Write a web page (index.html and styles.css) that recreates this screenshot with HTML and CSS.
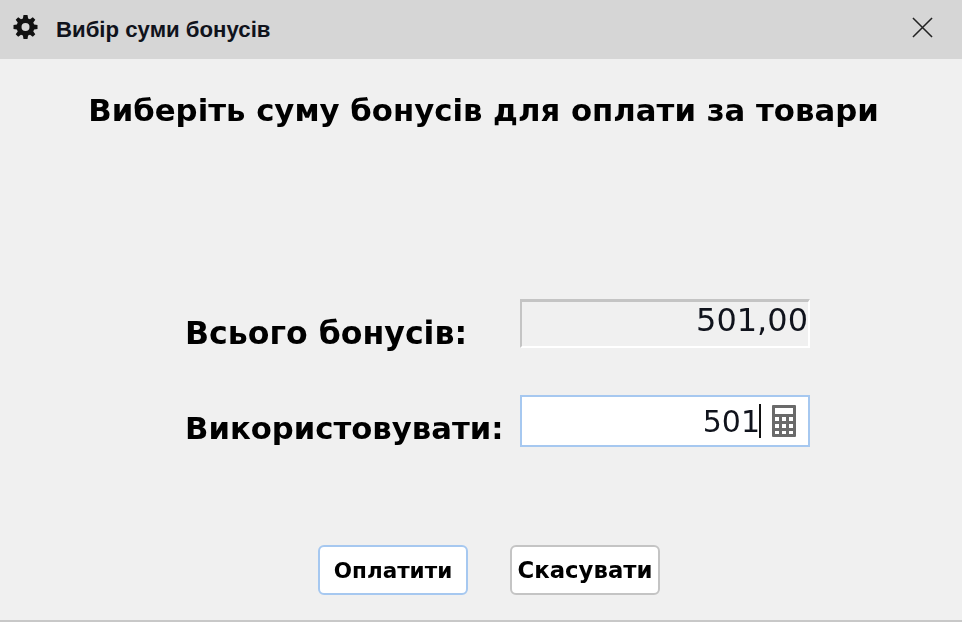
FILE: index.html
```html
<!DOCTYPE html>
<html lang="uk">
<head>
<meta charset="utf-8">
<title>Вибір суми бонусів</title>
<link rel="stylesheet" href="styles.css">
</head>
<body>
<div class="window">
  <header class="titlebar">
    <svg class="gear" viewBox="0 0 24 24" aria-hidden="true"><path fill-rule="evenodd" d="M10 0h4l.6 3.4 1.900.8 2.800-2 2.500 2.500-2 2.800.8 1.900L24 10v4l-3.400.6-.8 1.900 2 2.800-2.500 2.500-2.800-2-1.900.8L14 24h-4l-.6-3.400-1.900-.8-2.800 2-2.500-2.500 2-2.800-.8-1.900L0 14v-4l3.400-.6.8-1.900-2-2.800 2.500-2.500 2.800 2 1.900-.8zM12 8a4 4 0 1 0 0 8 4 4 0 0 0 0-8z"/></svg>
    <span class="window-title">Вибір суми бонусів</span>
    <svg class="close" viewBox="0 0 22 22" aria-hidden="true"><path d="M1 1l20 20M21 1L1 21"/></svg>
  </header>
  <main class="content">
    <h1 class="heading">Виберіть суму бонусів для оплати за товари</h1>
    <div class="form">
      <div class="row row-total">
        <span class="label label-total">Всього бонусів:</span>
        <div class="field field-readonly">501,00</div>
      </div>
      <div class="row row-use">
        <span class="label">Використовувати:</span>
        <div class="field field-active">
          <span class="value">501</span><span class="caret"></span>
          <svg class="calc" viewBox="0 0 24 32" aria-hidden="true"><path fill-rule="evenodd" d="M1 0h22a1 1 0 0 1 1 1v30a1 1 0 0 1-1 1H1a1 1 0 0 1-1-1V1a1 1 0 0 1 1-1zM3 3v6h18V3zM3 12v4h4v-4zm7 0v4h4v-4zm7 0v4h4v-4zM3 19v4h4v-4zm7 0v4h4v-4zm7 0v4h4v-4zM3 26v3h4v-3zm7 0v3h4v-3zm7 0v3h4v-3z"/></svg>
        </div>
      </div>
    </div>
    <div class="actions">
      <button class="btn btn-primary" type="button">Оплатити</button>
      <button class="btn btn-cancel" type="button">Скасувати</button>
    </div>
  </main>
</div>
</body>
</html>
```

FILE: styles.css
```css
* { box-sizing: border-box; }
html, body { margin: 0; height: 100%; }
body { background: #f0f0f0; overflow: hidden; font-family: "DejaVu Sans", Verdana, sans-serif; color: #000; }
.window { width: 962px; height: 622px; display: flex; flex-direction: column; border-bottom: 2px solid #c8c8c8; filter: blur(0.45px); }
.titlebar { height: 59px; flex: none; background: #d6d6d6; display: flex; align-items: center; padding: 0 29px 0 13px; }
.gear { width: 25px; height: 24px; flex: none; fill: #111; margin: 0 18px 5px 0; }
.window-title { font-family: "Liberation Sans", Arial, sans-serif; font-weight: 700; font-size: 22.2px; color: #10131c; flex: 1; }
.close { width: 21px; height: 21px; fill: none; stroke: #222; stroke-width: 1.6; flex: none; margin-bottom: 5px; }
.content { flex: 1; display: flex; flex-direction: column; align-items: center; }
.heading { margin: 30px 0 0; padding-left: 5px; font-size: 30.75px; line-height: 42px; font-weight: 700; text-align: center; white-space: nowrap; }
.form { margin-top: 168px; padding-left: 185px; width: 100%; }
.row { display: flex; }
.label { width: 335px; font-size: 30.7px; font-weight: 700; line-height: 40px; flex: none; }
.label-total { font-size: 31.6px; }
.row-total { height: 49px; }
.row-total .label { margin-top: 14px; }
.row-use { height: 52px; margin-top: 47px; }
.row-use .label { margin-top: 14px; }
.field { width: 290px; font-size: 30px; text-align: right; color: #10131c; }
.field-readonly { height: 49px; font-size: 32px; border-top: 3px solid #c4c4c4; border-left: 2px solid #c4c4c4; border-bottom: 2px solid #fff; border-right: 2px solid #fff; line-height: 36px; }
.field-active { height: 52px; background: #fff; border: 2px solid #a6c8f0; display: flex; align-items: center; justify-content: flex-end; padding-right: 12px; }
.value { margin-right: -1px; }
.caret { width: 2px; height: 34px; background: #111; margin: 0 11px 0 0; flex: none; }
.calc { width: 24px; height: 32px; fill: #6a6a6a; flex: none; }
.actions { margin-top: 98px; display: flex; gap: 42px; padding-left: 16px; }
.btn { width: 150px; height: 50px; border-radius: 6px; background: #fff; border: 2.5px solid #c4c4c4; font-family: "DejaVu Sans", Verdana, sans-serif; font-weight: 700; font-size: 21.5px; color: #000; padding: 0; }
.btn-primary { border-color: #a6c8f0; }
.btn-cancel { font-size: 22.8px; }
```
